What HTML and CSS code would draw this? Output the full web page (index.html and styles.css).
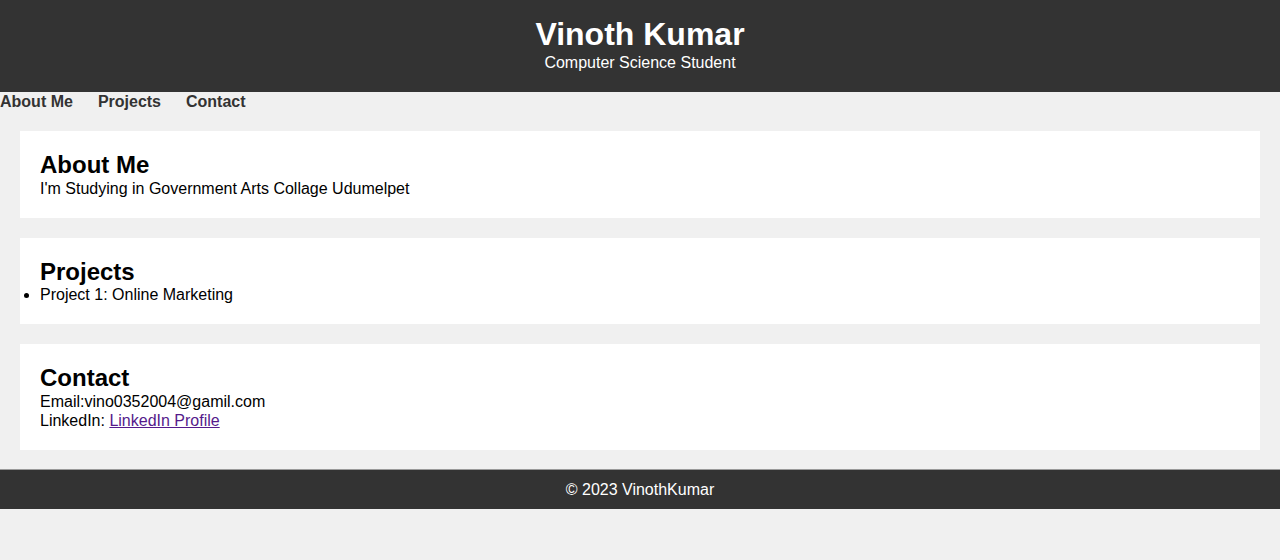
FILE: index.html
```html
<!DOCTYPE html>
<html lang="en">
<head>
<meta charset="utf-8">
<title>Vinoth Kumar</title>
<link rel="stylesheet" href="styles.css">
</head>
<body>
<header class="site-header">
  <h1 class="site-title">Vinoth Kumar</h1>
  <p class="site-subtitle">Computer Science Student</p>
</header>
<nav class="site-nav">
  <a href="#about">About Me</a>
  <a href="#projects">Projects</a>
  <a href="#contact">Contact</a>
</nav>
<main class="content">
  <section class="card" id="about">
    <h2>About Me</h2>
    <p>I'm Studying in Government Arts Collage Udumelpet</p>
  </section>
  <section class="card" id="projects">
    <h2>Projects</h2>
    <ul class="project-list">
      <li>Project 1: Online Marketing</li>
    </ul>
  </section>
  <section class="card" id="contact">
    <h2>Contact</h2>
    <p>Email:vino0352004@gamil.com</p>
    <p>LinkedIn: <a class="visited-link" href="#contact">LinkedIn Profile</a></p>
  </section>
</main>
<footer class="site-footer">
  <p>&copy; 2023 VinothKumar</p>
</footer>
</body>
</html>
```
FILE: styles.css
```css
html, body {
  margin: 0;
  padding: 0;
}
body {
  background: #f0f0f0;
  font-family: "Liberation Sans", Arial, sans-serif;
  font-size: 16px;
  line-height: 19px;
  color: #000;
}
.site-header {
  background: #333;
  color: #fff;
  text-align: center;
  padding: 16px 0 20px;
  height: 56px;
}
.site-title {
  margin: 0;
  font-size: 32px;
  line-height: 37px;
  font-weight: bold;
}
.site-subtitle {
  margin: 0;
  font-size: 16px;
}
.site-nav {
  display: flex;
  gap: 25px;
  height: 19px;
}
.site-nav a {
  color: #333;
  font-weight: bold;
  text-decoration: none;
}
.content {
  display: flex;
  flex-direction: column;
  gap: 20px;
  padding: 20px;
}
.card {
  background: #fff;
  padding: 20px;
}
.card h2 {
  margin: 0;
  font-size: 24px;
  line-height: 27.6px;
}
.card p {
  margin: 0;
}
.project-list {
  margin: 0;
  padding: 0;
}
.visited-link {
  color: #551a8b;
}
.site-footer {
  background: #333;
  color: #fff;
  text-align: center;
  padding: 10px 0;
  border-top: 1px solid #9a9a9a;
  margin-top: -1px;
}
.site-footer p {
  margin: 0;
}
```
